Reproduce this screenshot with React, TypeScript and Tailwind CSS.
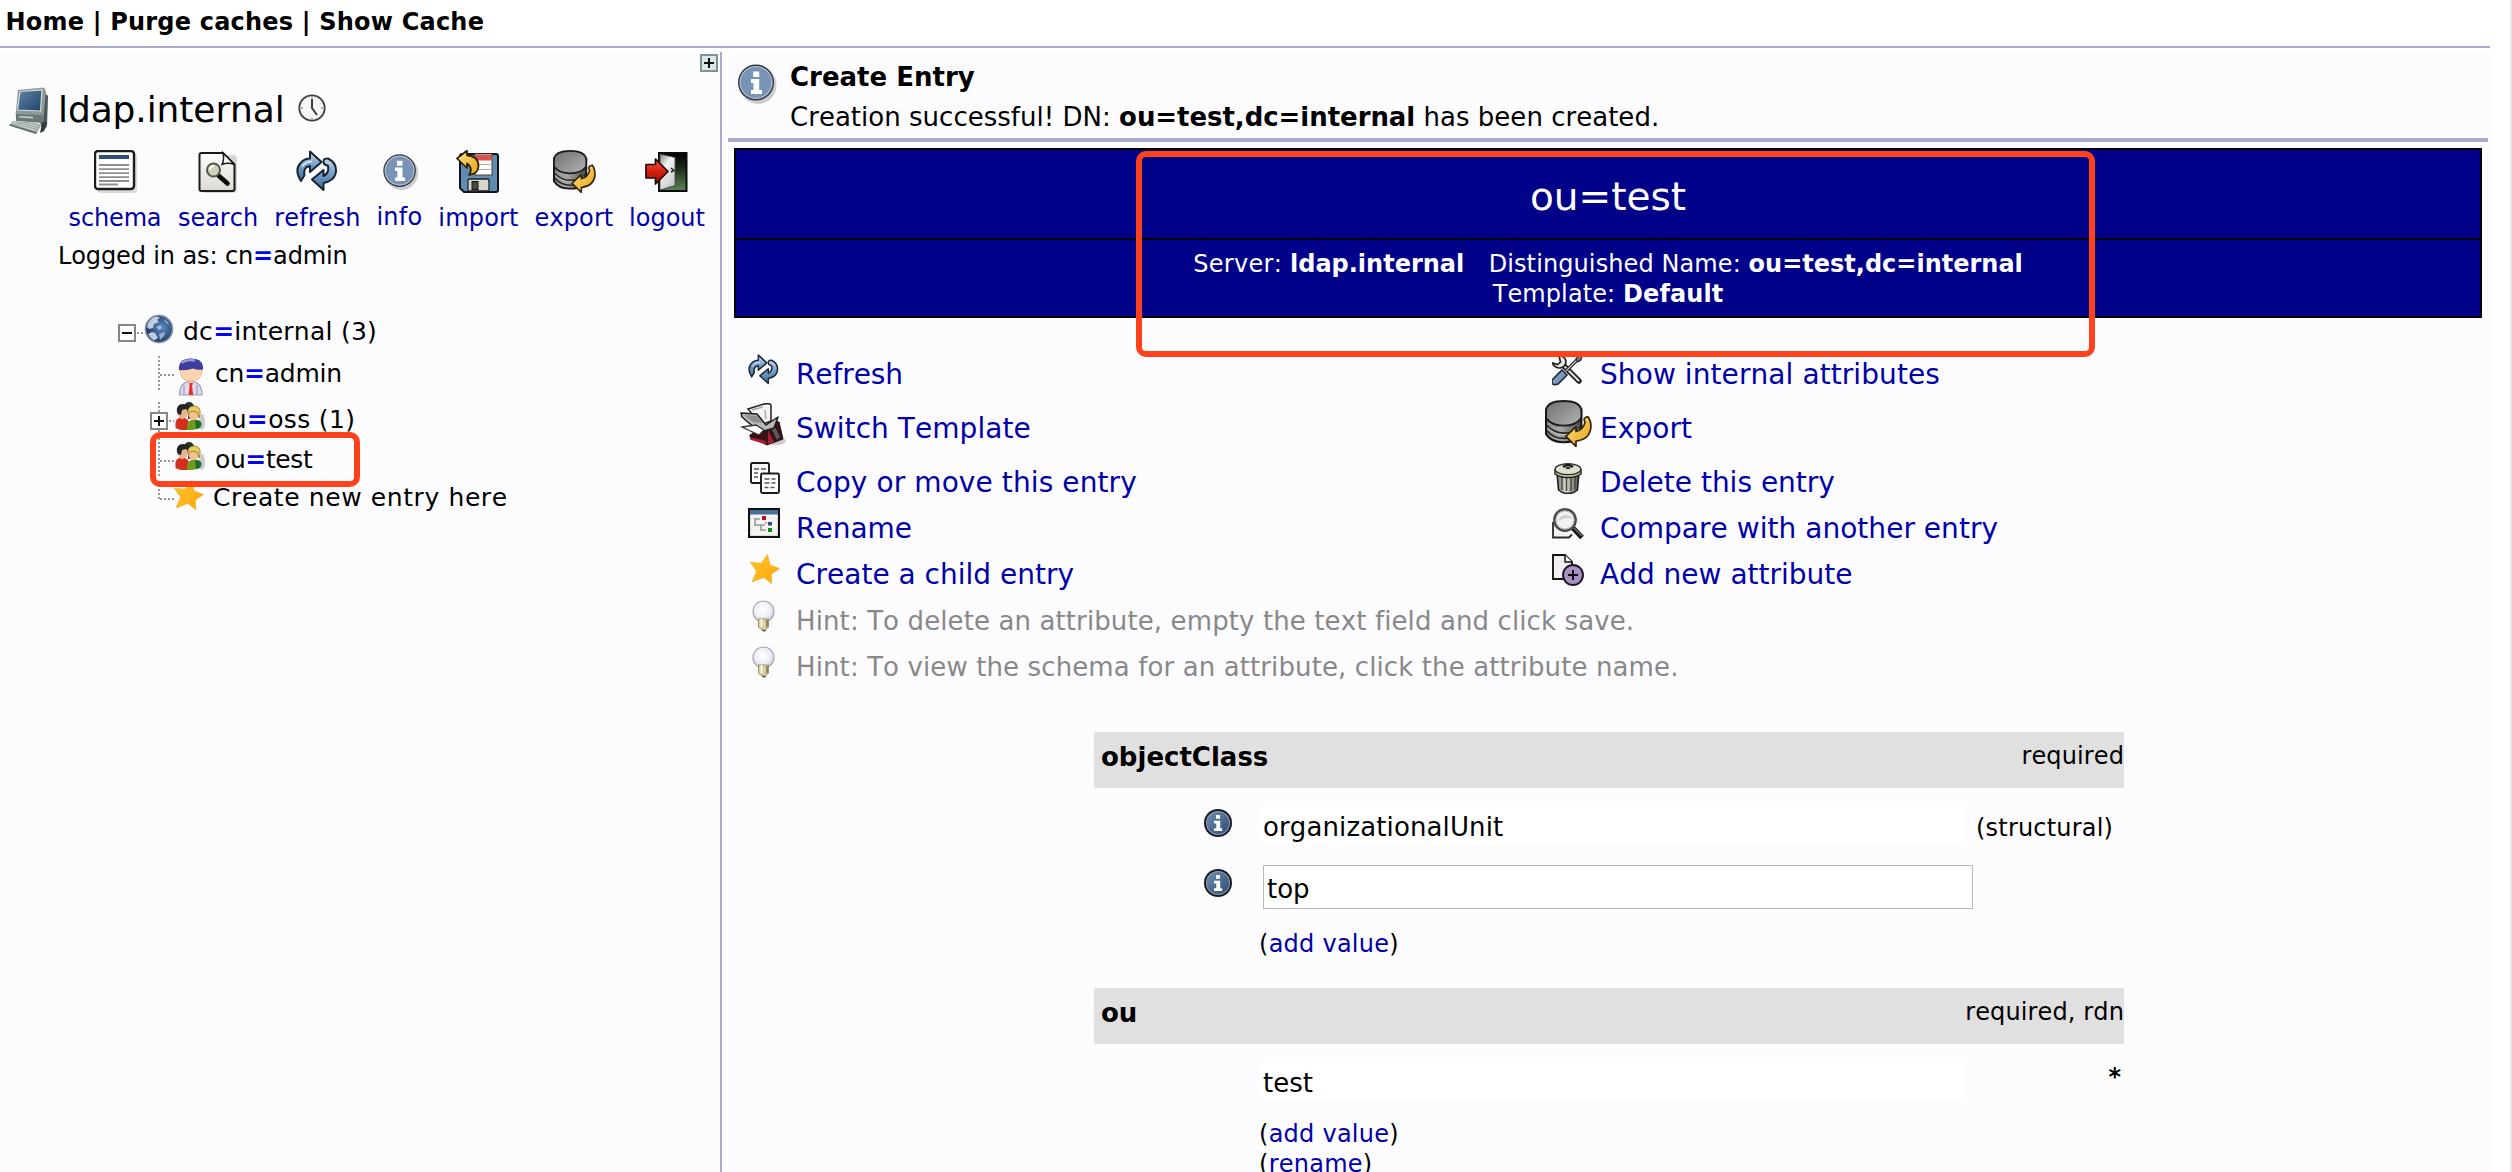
import React from "react";

type IconProps = { className?: string };

/* ---------- shared gradients ---------- */
function Defs() {
  return (
    <svg width="0" height="0" className="absolute" aria-hidden="true">
      <defs>
        <linearGradient id="blueArrow" x1="0" y1="0" x2="0" y2="1">
          <stop offset="0" stopColor="#c5daee" />
          <stop offset="0.5" stopColor="#6f9cc8" />
          <stop offset="1" stopColor="#3f6c98" />
        </linearGradient>
        <linearGradient id="gold" x1="0" y1="0" x2="1" y2="1">
          <stop offset="0" stopColor="#ffe58a" />
          <stop offset="1" stopColor="#e5a011" />
        </linearGradient>
        <linearGradient id="paper" x1="0" y1="0" x2="0" y2="1">
          <stop offset="0" stopColor="#ffffff" />
          <stop offset="1" stopColor="#dcd8d2" />
        </linearGradient>
        <linearGradient id="steel" x1="0" y1="0" x2="1" y2="1">
          <stop offset="0" stopColor="#6f6f6f" />
          <stop offset="1" stopColor="#b4b4b4" />
        </linearGradient>
        <linearGradient id="steelSide" x1="0" y1="0" x2="1" y2="0">
          <stop offset="0" stopColor="#8c8c8c" />
          <stop offset="0.4" stopColor="#a8a8a8" />
          <stop offset="1" stopColor="#4a4a4a" />
        </linearGradient>
        <linearGradient id="door" x1="0" y1="0" x2="0" y2="1">
          <stop offset="0" stopColor="#000000" />
          <stop offset="0.4" stopColor="#1c2a1c" />
          <stop offset="1" stopColor="#5f8258" />
        </linearGradient>
        <linearGradient id="doorPanel" x1="0" y1="0" x2="0.6" y2="1">
          <stop offset="0" stopColor="#7c7c7c" />
          <stop offset="0.4" stopColor="#f4f4f4" />
          <stop offset="1" stopColor="#c8c8c8" />
        </linearGradient>
        <linearGradient id="red" x1="0" y1="0" x2="0" y2="1">
          <stop offset="0" stopColor="#f0604a" />
          <stop offset="0.5" stopColor="#d41e0c" />
          <stop offset="1" stopColor="#9c1206" />
        </linearGradient>
        <radialGradient id="globe" cx="0.6" cy="0.45" r="0.6">
          <stop offset="0" stopColor="#5d8bc0" />
          <stop offset="0.6" stopColor="#35588a" />
          <stop offset="1" stopColor="#1c3560" />
        </radialGradient>
        <radialGradient id="bulb" cx="0.45" cy="0.4" r="0.6">
          <stop offset="0" stopColor="#ffffff" />
          <stop offset="0.6" stopColor="#eef0f8" />
          <stop offset="1" stopColor="#ccd0e0" />
        </radialGradient>
        <linearGradient id="darkInfo" x1="0" y1="0" x2="1" y2="1">
          <stop offset="0" stopColor="#6e8db2" />
          <stop offset="1" stopColor="#2f4d73" />
        </linearGradient>
        <linearGradient id="trash" x1="0" y1="0" x2="1" y2="0">
          <stop offset="0" stopColor="#77776c" />
          <stop offset="0.4" stopColor="#d8d8cc" />
          <stop offset="1" stopColor="#4e4e46" />
        </linearGradient>
        <linearGradient id="screen" x1="0" y1="0" x2="1" y2="1">
          <stop offset="0" stopColor="#5f85a8" />
          <stop offset="1" stopColor="#1f4266" />
        </linearGradient>
        <linearGradient id="star" x1="0" y1="0" x2="1" y2="1">
          <stop offset="0" stopColor="#ffc52a" />
          <stop offset="1" stopColor="#ffa40c" />
        </linearGradient>
      </defs>
    </svg>
  );
}

/* ---------- icons ---------- */
const Computer = ({ className }: IconProps) => (
  <svg viewBox="0 0 42 48" width="42" height="48" className={className}>
    <path d="M36 5l4 4-1 30-4 6-3-10z" fill="#4a5658" />
    <path d="M10 3L36 0.500l2 4-3 30-25-2L7.500 28z" fill="#8b9998" />
    <path d="M12 4.500l22-1.500-1.500 21L9.500 23z" fill="url(#screen)" stroke="#d5dcdb" strokeWidth="1.200" />
    <path d="M8 27l27 1-1 8-26-2z" fill="#6b7877" />
    <path d="M11 29l14 .8v1.600l-14-1z" fill="#c4ceca" />
    <path d="M5 34l20 1.500 9 2-6 9.500L1 38.500z" fill="#a9b5b0" />
    <path d="M6 35.500l19 2 5 1.500-4 5L4 38z" fill="#c9d1cc" />
    <path d="M5 37l23 5M8 35.500l22 5" stroke="#8e9a96" strokeWidth=".8" />
    <path d="M1 38.500L28 47l1-2L2 37z" fill="#66726e" />
    <path d="M34 36l5-1-3 9-4 2z" fill="#303a3c" />
  </svg>
);

const Clock = ({ className }: IconProps) => (
  <svg viewBox="0 0 28 28" width="28" height="28" className={className}>
    <circle cx="14" cy="14" r="12.700" fill="#f6f6f6" stroke="#3c3c3c" strokeWidth="1.800" />
    <path d="M14 5v9l5 7" fill="none" stroke="#333" strokeWidth="1.900" />
    <path d="M14 2.500v2M14 23.500v2M3 14h2M23 14h2" stroke="#999" strokeWidth="1.400" />
  </svg>
);

const Schema = ({ className }: IconProps) => (
  <svg viewBox="0 0 44 44" width="44" height="44" className={className}>
    <rect x="3" y="3" width="40" height="40" rx="4" fill="#00000022" />
    <rect x="1" y="1" width="39" height="38" rx="3" fill="#fff" stroke="#1c1c1c" strokeWidth="2.400" />
    <rect x="5" y="5" width="30" height="4" fill="#2f4f77" />
    <path d="M5 15h30M5 19.200h30M5 23.200h30M5 27.200h30M5 31h30M5 34.500h19" stroke="#8e8e8e" strokeWidth="1.800" />
  </svg>
);

const Search = ({ className }: IconProps) => (
  <svg viewBox="0 0 40 44" width="40" height="44" className={className}>
    <rect x="3" y="5" width="36" height="38" rx="4" fill="#00000026" />
    <path d="M3.500 3H25l11.500 11.500V39q0 2-2 2h-31q-2 0-2-2V5q0-2 2-2z" fill="url(#paper)" stroke="#1a1a1a" strokeWidth="2" />
    <path d="M25 3q1.500 6-.8 11.300Q30 12 36.500 14.500z" fill="#fff" stroke="#1a1a1a" strokeWidth="1.500" />
    <path d="M21 26l8.500 7.500" stroke="#0a0a0a" strokeWidth="4.600" strokeLinecap="round" />
    <circle cx="15.500" cy="20" r="6.500" fill="#cfd2b8" stroke="#55554c" strokeWidth="2" />
    <path d="M12 20q0-4 4-4" stroke="#fff" strokeWidth="1.800" fill="none" />
  </svg>
);

const Refresh = ({ className }: IconProps) => (
  <svg viewBox="0 0 42 42" className={className}>
    <g fill="url(#blueArrow)" stroke="#1b2530" strokeWidth="2" strokeLinejoin="round">
      <path d="M5 31Q-2 20 4.500 13 8 8.500 14 8.500V1.500L25.500 12 14 22v-6q-7 1-5.500 9z" />
      <path d="M28 14q-2-6 4-5.500 10 5 7.500 15.500-2 7-12 9V40L16 29.500 27.500 20v6q6-3 4.500-10z" />
    </g>
    <path d="M6 17q3-5.500 10-5.500" stroke="#e2eefa" strokeWidth="1.300" fill="none" />
  </svg>
);

const Info = ({ className }: IconProps) => (
  <svg viewBox="0 0 40 42" className={className}>
    <ellipse cx="21" cy="22" rx="18.500" ry="19" fill="#00000030" />
    <circle cx="19" cy="19.500" r="18" fill="#30353b" />
    <circle cx="19" cy="19.500" r="16.600" fill="#b9c6d6" />
    <circle cx="19" cy="19.500" r="15.400" fill="#7893b5" />
    <path d="M16.200 8.500h6v5.500h-6zM14 16h8.200v11H25v4H14v-4h2.500v-7H14z" fill="#fff" />
  </svg>
);

const DarkInfo = ({ className }: IconProps) => (
  <svg viewBox="0 0 30 30" width="30" height="30" className={className}>
    <circle cx="15" cy="15" r="14" fill="#181c22" />
    <circle cx="15" cy="15" r="12" fill="#90a2b6" />
    <circle cx="15" cy="15" r="11.100" fill="url(#darkInfo)" />
    <path d="M13 7h4v3.800h-4zM11 12.800h6.200v7.400h2V23H11v-2.800h2.300v-4.600H11z" fill="#fff" />
  </svg>
);

const Import = ({ className }: IconProps) => (
  <svg viewBox="0 0 44 44" width="44" height="44" className={className}>
    <path d="M4 6q0-2 2-2h34q2 0 2 2v34q0 2-2 2H8l-4-4z" fill="#5f8cb0" stroke="#101418" strokeWidth="2" />
    <rect x="19" y="4" width="17" height="21" fill="#fff" stroke="#444" strokeWidth="1" />
    <rect x="19" y="5" width="17" height="5.500" fill="#d9534c" />
    <path d="M20 14.500h15M20 19.500h15" stroke="#c6a4a4" strokeWidth="1.200" />
    <rect x="12" y="29" width="21" height="12" rx="1.500" fill="#d6d8cf" stroke="#222" strokeWidth="1.300" />
    <rect x="16" y="31.500" width="6" height="8" fill="#4c4c44" stroke="#111" strokeWidth="1" />
    <path d="M1 8.500L11 0.500v4.800q12 1 11.500 11.200Q22 24 13 25q4.500-7-2-11.500V18z" fill="url(#gold)" stroke="#2a1e04" strokeWidth="1.700" strokeLinejoin="round" />
  </svg>
);

const Export = ({ className }: IconProps) => (
  <svg viewBox="0 0 44 44" className={className}>
    <path d="M1 9v23q5 8 17 7.500Q33 39 34 31V9z" fill="url(#steelSide)" stroke="#161616" strokeWidth="2" />
    <path d="M2 24q6 7 16 7t15-6M2 29q6 7 16 7t15-7" fill="none" stroke="#262626" strokeWidth="1.600" />
    <path d="M2.500 26q6 6.500 15.500 6.500T32 27" fill="none" stroke="#c2c2c2" strokeWidth="1" />
    <path d="M1 9v8q5 7 16.500 7T34 17V9Q32 1 17.500 1T1 9z" fill="url(#steel)" stroke="#1c1c1c" strokeWidth="1.800" />
    <path d="M40 15.500q-5 1-2.500 5.500-2 7-8.500 8.500v-4.500L19.500 34 29 43.500v-5q13-1.500 14-13 0-7-3-10z" fill="url(#gold)" stroke="#33250a" strokeWidth="1.600" strokeLinejoin="round" />
  </svg>
);

const Logout = ({ className }: IconProps) => (
  <svg viewBox="0 0 44 44" width="44" height="44" className={className}>
    <rect x="14" y="3" width="27.500" height="38" fill="url(#door)" stroke="#0c0c0c" strokeWidth="2" />
    <path d="M15 4l15 3.500v28L15 40z" fill="url(#doorPanel)" stroke="#444" strokeWidth=".8" />
    <path d="M26 18l3 2.500-3 1.500" stroke="#222" strokeWidth="1.500" fill="none" />
    <path d="M1 14.500h9.500V9L23 21.500 10.500 34v-6H1z" fill="url(#red)" stroke="#260401" strokeWidth="1.700" strokeLinejoin="round" />
  </svg>
);

const Globe = ({ className }: IconProps) => (
  <svg viewBox="0 0 30 30" width="30" height="30" className={className}>
    <circle cx="15" cy="15" r="14.300" fill="#a9b6c8" />
    <circle cx="15" cy="15" r="13" fill="url(#globe)" />
    <path d="M3 13Q4 5 12 2.500l4 1-3 2.500 2 2-5 2-1 4-4 1zM4 20l4-2 3 1 3 5-4 2.500Q6 24 4 20z" fill="#e3ecf5" opacity=".8" />
    <path d="M12 13l5-2 1 3-3 2zM15 20l6-2-1 4-4 4z" fill="#b6c9de" opacity=".75" />
    <path d="M20 5l4 3 1 3-4-3z" fill="#c8d8ea" opacity=".6" />
    <circle cx="15" cy="15" r="13.600" fill="none" stroke="#8191aa" strokeWidth="1.200" />
  </svg>
);

const Person = ({ className }: IconProps) => (
  <svg viewBox="0 0 28 38" width="28" height="38" className={className}>
    <path d="M2.500 37q0-9 5-12l6-2 6.500 2q5 3 5 12z" fill="#dcdcec" stroke="#9a9ab4" strokeWidth="1.200" />
    <path d="M7 27v10M20 27v10" stroke="#a9aac4" strokeWidth="1.500" />
    <path d="M12 25h4l-1 3 1.200 9h-4.600l1-9z" fill="#ea2f28" />
    <path d="M3 12q0-8 11-8t11 8q0 8-6 10.500-5 2-10 0Q3 20 3 12z" fill="#fbd3ac" stroke="#e0b086" strokeWidth=".7" />
    <path d="M2 12Q1 1 13 .5q12-.5 13 8v3q-6 1-10-1-6 2.500-14 1.500z" fill="#3d3f9e" />
    <path d="M5 5q4-4 13-2.500" stroke="#9a9dd9" strokeWidth="2.400" fill="none" />
  </svg>
);

const People = ({ className }: IconProps) => (
  <svg viewBox="0 0 30 28" width="30" height="28" className={className}>
    <ellipse cx="27" cy="20" rx="3" ry="8" fill="#00000030" />
    <ellipse cx="14" cy="5" rx="5" ry="5" fill="#26322c" />
    <path d="M13 7l5 2v8h-5z" fill="#8a1a4a" />
    <path d="M0.500 26V20q1-4 6-4.500 7 0 8 6.500v6q-9 1-14-2z" fill="#d5301f" />
    <ellipse cx="7.500" cy="10.500" rx="5" ry="6.500" fill="#e8b48c" />
    <path d="M2 10Q1 2 8 2t6 6l-3-1-4 1-1 5-3-1z" fill="#222428" />
    <path d="M12 28v-5q1-5 7-5.500 7 0 7.500 4.500L26 25q-4 3-9 3z" fill="#6f9a1c" />
    <path d="M20 18q6 0 6.500 4L25 26l-4 1z" fill="#1d6b2d" />
    <ellipse cx="18.500" cy="12.500" rx="5" ry="5.500" fill="#f0c08e" />
    <path d="M13 12Q12 4 19 4t6 8l-1 4-2-6-5-1z" fill="#e9cf5a" stroke="#8a7322" strokeWidth=".8" />
  </svg>
);

const Star = ({ className }: IconProps) => (
  <svg viewBox="0 0 30 30" width="30" height="30" className={className}>
    <path d="M17.500 0.500l2.700 10.500 9.500 3.500-8.200 5.500.3 9.700-8-6.200L2 28l4.500-11L0 8l11 1.300z" fill="url(#star)" stroke="#f0b429" strokeWidth=".6" />
  </svg>
);

const Templates = ({ className }: IconProps) => (
  <svg viewBox="0 0 47 46" width="47" height="46" className={className}>
    <ellipse cx="36" cy="38" rx="10" ry="4" fill="#00000030" />
    <path d="M10 32l14-8 10-6 5 1 4 17-16 6-8-4-9-4z" fill="#3a1014" stroke="#161616" strokeWidth="1" />
    <path d="M10 34l16 4v3.500l-16-5zM28 27l6 12-6 2.500z" fill="#a32035" />
    <path d="M34 22l6 12-3 3-6-12z" fill="#5a5a5a" />
    <path d="M8 6l16-5q6-1 7 1v16l-10 4z" fill="#f4f4f4" stroke="#222" strokeWidth="1.500" />
    <path d="M12 7l11-3M25 7l1 9" stroke="#aaa" strokeWidth="1.500" />
    <path d="M1 10l16 1 9 11 12-8-4 11-10 3-8-2L2 14z" fill="#b9b9b9" stroke="#1c1c1c" strokeWidth="1.500" strokeLinejoin="round" />
    <path d="M2 24l14-2 8 5-5 5z" fill="#fff" stroke="#333" strokeWidth="1.300" />
    <path d="M4 12l13 1 6 7-10-1z" fill="#8d8d8d" />
  </svg>
);

const Copy = ({ className }: IconProps) => (
  <svg viewBox="0 0 30 32" width="30" height="32" className={className}>
    <g fill="#fdfdfd" stroke="#1a1a1a" strokeWidth="1.900">
      <rect x="1" y="1" width="18" height="20" rx="1.500" />
      <rect x="11" y="11.500" width="18" height="19.500" rx="1.500" />
    </g>
    <path d="M4 7h5M11 7h5M4 11h4M4 15h4M14.500 17h5M21.500 17h4M14.500 21h5M21.500 21h4M14.500 25.500h4M20.500 25.500h4" stroke="#555" strokeWidth="1.700" />
  </svg>
);

const Rename = ({ className }: IconProps) => (
  <svg viewBox="0 0 32 30" width="32" height="30" className={className}>
    <rect x="1" y="1" width="30" height="28" fill="#f3f3f1" stroke="#101010" strokeWidth="2.200" />
    <rect x="2" y="2" width="28" height="4.500" fill="#49709c" />
    <path d="M7 10v8M7 11h5M7 17h10M13 17v6M13 22h5M17 15h2" stroke="#999" strokeWidth="1.600" fill="none" />
    <rect x="14" y="8" width="4" height="4" fill="#c00f1b" />
    <rect x="20" y="14" width="4" height="3.500" fill="#2c4f78" />
    <rect x="20" y="20" width="4" height="4" fill="#0e8a1c" />
  </svg>
);

const Bulb = ({ className }: IconProps) => (
  <svg viewBox="0 0 24 32" width="24" height="32" className={className}>
    <circle cx="11.500" cy="11.500" r="10.500" fill="url(#bulb)" stroke="#a9a9b4" strokeWidth="1.200" />
    <path d="M6.500 19h10v8q-2 3-5 3t-5-3z" fill="#d9cf9f" stroke="#9a9270" strokeWidth="1" />
    <path d="M14 20v8l2-1.500V20z" fill="#8f8660" />
    <path d="M9.500 19v8" stroke="#fffbe2" strokeWidth="1.800" />
    <path d="M9.500 30h5l-1.500 1.500h-2z" fill="#5a5a5a" />
  </svg>
);

const Tools = ({ className }: IconProps) => (
  <svg viewBox="0 0 32 32" width="32" height="32" className={className}>
    <path d="M10 10l17 17" stroke="#1c1c1c" strokeWidth="5.400" strokeLinecap="round" />
    <path d="M9 9l17.500 17.500" stroke="#dedede" strokeWidth="2.200" strokeLinecap="round" />
    <path d="M7 2q6 0 7 5 0 6-6 7-6 0-7.500-5l5 1.500 3-2.500z" fill="#e4e4e4" stroke="#1c1c1c" strokeWidth="1.600" />
    <path d="M14 17L27 4" stroke="#1c1c1c" strokeWidth="3.400" />
    <path d="M14 17L25 6" stroke="#c6c6c6" strokeWidth="1.200" />
    <path d="M24 5l3-4 3 1-1 4-3 2z" fill="#777" stroke="#222" strokeWidth="1.200" />
    <path d="M10 16l5 5-9 9q-4 1.500-6-.5-.5-3 1-4.500z" fill="#7a99bd" stroke="#1f2833" strokeWidth="1.600" />
  </svg>
);

const Trash = ({ className }: IconProps) => (
  <svg viewBox="0 0 28 32" width="28" height="32" className={className}>
    <path d="M3 11l1.500 17q4 3.500 9.500 3.500t9.500-3.500L25 11z" fill="url(#trash)" stroke="#1a1a16" strokeWidth="1.500" />
    <path d="M8 14v14M12.500 15v14M17 15v14M21 14v13" stroke="#4b4b42" strokeWidth="1.500" />
    <path d="M1 8v4q5 3.500 13 3.500T27 12V8z" fill="#c9c9bc" stroke="#1a1a16" strokeWidth="1.400" />
    <ellipse cx="14" cy="7.200" rx="13" ry="5.500" fill="#dedfd0" stroke="#2a2a24" strokeWidth="1.300" />
    <path d="M9 5q5-4 10 0" stroke="#1a1a16" strokeWidth="2.600" fill="none" />
    <ellipse cx="14" cy="6" rx="2.500" ry="1.300" fill="#3a3a34" />
  </svg>
);

const Compare = ({ className }: IconProps) => (
  <svg viewBox="0 0 32 32" width="32" height="32" className={className}>
    <path d="M1 14v15.500h16l3-3" fill="#f4f4f4" stroke="#2a2a2a" strokeWidth="1.800" />
    <path d="M21 20l9 9.500" stroke="#141414" strokeWidth="5" />
    <path d="M22 20l8 8" stroke="#777" strokeWidth="1.200" />
    <circle cx="13" cy="12" r="10.700" fill="#f1f1f1" stroke="#4a4a4a" strokeWidth="2.400" />
    <circle cx="13" cy="12" r="9" fill="none" stroke="#b4b4b4" strokeWidth="1" />
    <path d="M6 13Q8 6 15 7q5 1 5 4-5-3-14 2z" fill="#cfcfcf" />
  </svg>
);

const AddAttr = ({ className }: IconProps) => (
  <svg viewBox="0 0 32 32" width="32" height="32" className={className}>
    <path d="M1 1h12l7 7v17H1z" fill="#f1f1f1" stroke="#151515" strokeWidth="1.900" />
    <path d="M13 1v7h7" fill="#fff" stroke="#151515" strokeWidth="1.500" />
    <circle cx="21" cy="21" r="10" fill="#a791c0" stroke="#1f1828" strokeWidth="1.900" />
    <path d="M21 16v10M16 21h10" stroke="#0f0b14" strokeWidth="2" />
  </svg>
);

/* ---------- tree connectors ---------- */
const dots = { stroke: "#9a9a9a", strokeWidth: 2, strokeDasharray: "2 2" };

const Expander = ({ plus }: { plus?: boolean }) => (
  <g>
    <rect x="1" y="1" width="16" height="16" fill="#fff" stroke="#868686" strokeWidth="2" />
    <path d={plus ? "M4 9h10M9 4v10" : "M4 9h10"} stroke="#111" strokeWidth="2" />
  </g>
);

const ConnMinus = ({ className }: IconProps) => (
  <svg viewBox="0 0 26 18" width="26" height="18" className={className}>
    <Expander />
    <path d="M19 9h7" {...dots} />
  </svg>
);
const ConnMid = ({ className }: IconProps) => (
  <svg viewBox="0 0 24 36" width="24" height="36" className={className}>
    <path d="M9 0v35M10 19h14" {...dots} />
  </svg>
);
const ConnPlus = ({ className }: IconProps) => (
  <svg viewBox="0 0 24 40" width="24" height="40" className={className}>
    <path d="M9 0v40M19 19h5" {...dots} />
    <g transform="translate(0 10)">
      <Expander plus />
    </g>
  </svg>
);
const ConnEnd = ({ className }: IconProps) => (
  <svg viewBox="0 0 24 20" width="24" height="20" className={className}>
    <path d="M9 0v18M10 18h14" {...dots} />
  </svg>
);

/* ---------- left panel ---------- */
const Eq = () => <span className="font-bold text-[#0000ff]">=</span>;

const toolbar = [
  { label: "schema", col: "w-[109px]", icon: <Schema className="ml-0.5" />, text: "tracking-[-0.15px]" },
  { label: "search", col: "w-[97px]", icon: <Search />, text: "" },
  { label: "refresh", col: "w-[102px]", icon: <Refresh className="h-[42px] w-[42px]" />, text: "tracking-[0.15px]" },
  { label: "info", col: "w-[62px]", icon: <Info className="mt-[3px] ml-0.5 h-[38px] w-[37px]" />, text: "tracking-[0.3px]" },
  { label: "import", col: "w-[96px]", icon: <Import />, text: "tracking-[0.2px]" },
  { label: "export", col: "w-[95px]", icon: <Export className="ml-0.5 h-[43px] w-[43px]" />, text: "tracking-[0.1px]" },
  { label: "logout", col: "w-[91px]", icon: <Logout />, text: "" },
];

function LeftPanel() {
  return (
    <aside className="h-full w-[722px] shrink-0 border-r-2 border-[#aaaacc] bg-[#fcfcfe]">
      <div className="flex h-7 justify-end pt-0.5 pr-0.5">
        <div className="flex h-[18px] w-[18px] items-center justify-center border-2 border-[#7f9297] bg-[#dbe8e8]">
          <svg viewBox="0 0 10 10" width="10" height="10">
            <path d="M0 5h10M5 0v10" stroke="#111" strokeWidth="2" />
          </svg>
        </div>
      </div>

      <div className="flex h-[60px] items-start pl-2">
        <Computer className="mt-[7px]" />
        <span className="ml-2 text-[36px] leading-[60px] tracking-[-0.1px]">ldap.internal</span>
        <Clock className="mt-3.5 ml-[13px]" />
      </div>

      <nav className="flex h-[103px] pt-2.5 pl-[60px]">
        {toolbar.map((t) => (
          <div key={t.label} className={`flex shrink-0 flex-col items-center ${t.col}`}>
            <div className="flex h-[42px] items-start">{t.icon}</div>
            <a className={`pl-px text-[24px] leading-[53px] text-[#0000aa] ${t.text}`}>{t.label}</a>
          </div>
        ))}
      </nav>

      <p className="h-[67px] pl-[58px] text-[24px] leading-[27px] tracking-[-0.12px]">
        Logged in as: cn
        <Eq />
        admin
      </p>

      <ul className="text-[25px]">
        <li className="flex h-[42px] items-start pl-[118px] leading-[43px]">
          <ConnMinus className="mt-3.5" />
          <Globe className="mt-1" />
          <span className="ml-[9px] tracking-[0.25px]">
            dc
            <Eq />
            internal (3)
          </span>
        </li>
        <li className="flex h-[42px] items-start pl-[150px] leading-[44px]">
          <ConnMid className="mt-1" />
          <Person className="mt-1.5 ml-[3px]" />
          <span className="ml-2.5 tracking-[-0.25px]">
            cn
            <Eq />
            admin
          </span>
        </li>
        <li className="flex h-[50px] items-start pl-[150px] leading-[52px]">
          <ConnPlus className="mt-2" />
          <People className="mt-2 ml-px" />
          <span className="ml-2.5 tracking-[0.35px]">
            ou
            <Eq />
            oss (1)
          </span>
        </li>
        <li className="flex h-[30px] items-start pl-[150px] leading-[32px]">
          <ConnMid className="-mt-0.5" />
          <People className="-mt-0.5 ml-px" />
          <span className="ml-2.5 tracking-[-0.4px]">
            ou
            <Eq />
            test
          </span>
        </li>
        <li className="flex h-[46px] items-start pl-[150px] leading-[48px]">
          <ConnEnd className="mt-[7px]" />
          <Star className="mt-1.5" />
          <span className="ml-[9px] tracking-[0.6px]">Create new entry here</span>
        </li>
      </ul>
    </aside>
  );
}

/* ---------- right panel ---------- */
type Action = { label: string; icon: React.ReactNode; track: string };

const actionRows: { h: string; left: Action; right: Action }[] = [
  {
    h: "h-[46px] leading-[48px]",
    left: { label: "Refresh", icon: <Refresh className="mt-[3px] ml-2 h-[31px] w-[31px]" />, track: "tracking-[-0.1px]" },
    right: { label: "Show internal attributes", icon: <Tools className="mt-[3px] ml-2" />, track: "tracking-[0.08px]" },
  },
  {
    h: "h-[62px] leading-[64px]",
    left: { label: "Switch Template", icon: <Templates className="mt-1.5" />, track: "tracking-[0.05px]" },
    right: { label: "Export", icon: <Export className="mt-[3px] ml-px h-[47px] w-[47px]" />, track: "tracking-[0.06px]" },
  },
  {
    h: "h-[46px] leading-[48px]",
    left: { label: "Copy or move this entry", icon: <Copy className="mt-[3px] ml-2.5" />, track: "tracking-[0.1px]" },
    right: { label: "Delete this entry", icon: <Trash className="mt-[3px] ml-2.5" />, track: "" },
  },
  {
    h: "h-[46px] leading-[48px]",
    left: { label: "Rename", icon: <Rename className="mt-[3px] ml-2" />, track: "" },
    right: { label: "Compare with another entry", icon: <Compare className="mt-[3px] ml-2" />, track: "tracking-[0.03px]" },
  },
  {
    h: "h-[46px] leading-[48px]",
    left: { label: "Create a child entry", icon: <Star className="mt-[3px] ml-2.5" />, track: "" },
    right: { label: "Add new attribute", icon: <AddAttr className="mt-[3px] ml-2" />, track: "" },
  },
];

const hints = [
  "Hint: To delete an attribute, empty the text field and click save.",
  "Hint: To view the schema for an attribute, click the attribute name.",
];

function ActionCell({ a, w }: { a: Action; w: string }) {
  return (
    <div className={`flex items-start ${w}`}>
      <div className="w-14 shrink-0">{a.icon}</div>
      <a className={`text-[28px] text-[#0000aa] ${a.track}`}>{a.label}</a>
    </div>
  );
}

function AttrHeader({ name, note }: { name: string; note: string }) {
  return (
    <div className="flex h-14 items-start justify-between bg-[#e0e0e0] pl-[7px]">
      <b className="text-[26px] leading-[50px]">{name}</b>
      <span className="text-[24px] leading-[49px] tracking-[0.12px]">{note}</span>
    </div>
  );
}

const ParenLink = ({ children, className }: { children: string; className: string }) => (
  <div className={`pl-[165px] text-[24px] tracking-[0.25px] ${className}`}>
    (<a className="text-[#0000aa]">{children}</a>)
  </div>
);

function Main() {
  return (
    <main className="ml-[5px] h-full w-[1763px] shrink-0 overflow-hidden bg-[#fcfcfe]">
      <div className="flex h-[86px] items-start pl-2.5">
        <Info className="mt-[11px] h-[42px] w-10" />
        <div className="ml-[13px] pt-1.5 text-[26px]">
          <h3 className="leading-[39px] font-bold">Create Entry</h3>
          <p className="leading-[41px] tracking-[0.02px]">
            Creation successful! DN: <b className="tracking-[-0.05px]">ou=test,dc=internal</b> has been created.
          </p>
        </div>
      </div>
      <div className="ml-px h-1 w-[1760px] bg-[#aaaacc]" />

      <div className="mt-1.5 ml-[7px] h-[170px] w-[1748px] border-2 border-black bg-[#000088] text-center text-white">
        <h1 className="h-[90px] border-b-2 border-black text-[39px] leading-[93px]">ou=test</h1>
        <div className="pt-[9px] text-[24px] leading-[30px] tracking-[0.1px]">
          <div className="whitespace-pre">
            <span className="tracking-[0.3px]">Server: </span>
            <b className="tracking-normal">ldap.internal</b>
            <span className="tracking-[0.5px]">{"   "}</span>Distinguished Name:{" "}
            <b className="tracking-normal">ou=test,dc=internal</b>
          </div>
          <div>
            Template: <b>Default</b>
          </div>
        </div>
      </div>

      <div className="mt-[33px] ml-[13px]">
        {actionRows.map((r) => (
          <div key={r.left.label} className={`flex ${r.h}`}>
            <ActionCell a={r.left} w="w-[804px]" />
            <ActionCell a={r.right} w="w-[700px]" />
          </div>
        ))}
        {hints.map((h) => (
          <div key={h} className="flex h-[46px] items-start leading-[49px]">
            <div className="w-14 shrink-0">
              <Bulb className="mt-[3px] ml-3" />
            </div>
            <span className="text-[26px] tracking-[0.11px] text-[#888888]">{h}</span>
          </div>
        ))}
      </div>

      <section className="mt-[43px] ml-[367px] w-[1030px]">
        <AttrHeader name="objectClass" note="required" />
        <div className="flex h-14 items-start pt-[18px] pl-[109px]">
          <DarkInfo className="mt-0.5" />
          <div className="ml-[29px] h-[38px] w-[704px] bg-white pl-px text-[26px] leading-[43px] tracking-[0.12px]">
            organizationalUnit
          </div>
          <span className="ml-2.5 text-[24px] leading-[45px] tracking-[0.2px]">(structural)</span>
        </div>
        <div className="flex h-[65px] items-start pt-[21px] pl-[109px]">
          <DarkInfo className="mt-[3px]" />
          <div className="ml-[30px] h-11 w-[710px] border border-[#b8b8b8] bg-white pl-[3px] text-[26px] leading-[46px]">
            top
          </div>
        </div>
        <ParenLink className="mt-5 mb-[29px] leading-[30px]">add value</ParenLink>

        <AttrHeader name="ou" note="required, rdn" />
        <div className="flex h-14 items-start pt-[18px] pl-[168px]">
          <div className="h-[38px] w-[704px] bg-white pl-px text-[26px] leading-[43px]">test</div>
          <b className="ml-auto pr-[3px] text-[24px] leading-[31px]">*</b>
        </div>
        <ParenLink className="mt-[19px] leading-[30px]">add value</ParenLink>
        <ParenLink className="leading-[30px]">rename</ParenLink>
      </section>
    </main>
  );
}

export default function App() {
  return (
    <div className="relative flex h-[1172px] w-[2512px] overflow-hidden bg-white font-['DejaVu_Sans',Verdana,sans-serif] whitespace-nowrap text-black [font-kerning:none] [&_svg]:shrink-0">
      <Defs />
      <div className="w-[2510px] shrink-0">
        <header className="h-[46px] pl-[5.5px] text-[24px] leading-[45px] font-bold tracking-[0.2px]">
          Home | Purge caches | Show Cache
        </header>
        <div className="mb-1 h-0.5 w-[2490px] bg-[#aaaacc]" />
        <div className="flex h-[1120px]">
          <LeftPanel />
          <Main />
        </div>
      </div>
      <div className="w-0.5 shrink-0 bg-[#e8e8e8]" />

      {/* highlight frames over the new entry */}
      <div className="absolute top-[432px] left-[150px] h-[55px] w-[210px] rounded-[10px] border-[6px] border-[#ff421b]" />
      <div className="absolute top-[151px] left-[1136px] h-[206px] w-[959px] rounded-[10px] border-[6px] border-[#ff421b]" />
    </div>
  );
}
